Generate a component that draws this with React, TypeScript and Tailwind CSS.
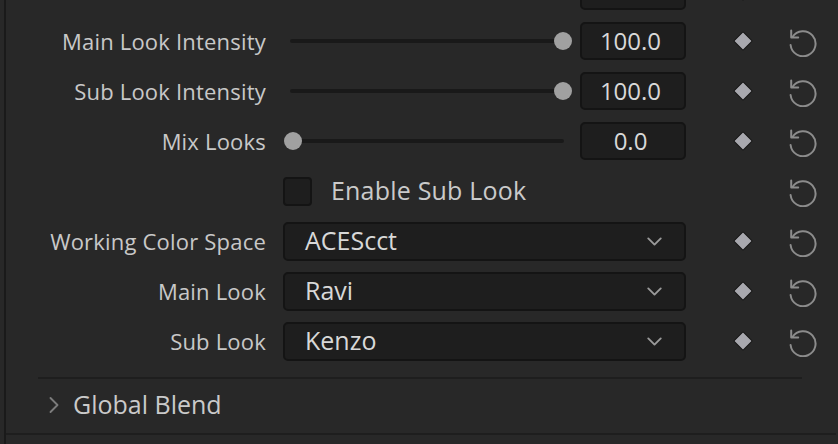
import React from 'react';
import { ChevronDown, ChevronRight } from 'lucide-react';

const labelCls = 'w-[260px] shrink-0 text-right text-[22px] tracking-[0.2px] text-[#c8c8c8] leading-none';

const Diamond: React.FC<{ hidden?: boolean }> = ({ hidden }) => (
    <div className="ml-[47px] flex h-[20px] w-[20px] shrink-0 items-center justify-center">
        {!hidden && <div className="h-[14px] w-[14px] rotate-45 rounded-[1px] border border-[#1a1a1a] bg-[#a8a8ae]" />}
    </div>
);

const Reset: React.FC = () => (
    <div className="ml-[33px] flex h-[32px] w-[32px] shrink-0 items-center justify-center">
        <svg width="32" height="32" viewBox="0 0 32 32" fill="none" stroke="#8c8c8c" strokeWidth="2" strokeLinecap="round" strokeLinejoin="round">
            <path d="M6.5 12 A12.5 12.5 0 1 1 4.6 20" />
            <path d="M5.2 5.5 V12.5 H12.2" />
        </svg>
    </div>
);

const SliderRow: React.FC<{ label: string; value: string; pct: number }> = ({ label, value, pct }) => (
    <div className="flex h-[50px] items-center">
        <span className={labelCls}>{label}</span>
        <div className="relative ml-[17px] h-[20px] w-[289px] shrink-0">
            <div className="absolute left-[7px] right-[8px] top-[8px] h-[4px] rounded-full bg-[#191919]" />
            <div
                className="absolute top-[1px] h-[18px] w-[18px] rounded-full bg-[#a0a0a0]"
                style={{ left: `${1 + pct * 270}px` }}
            />
        </div>
        <div className="ml-[8px] flex h-[38px] w-[106px] shrink-0 items-center justify-center rounded-[5px] border-2 border-[#141414] bg-[#1e1e1e] pr-[5px] text-[24px] text-[#d8d8d8]">
            {value}
        </div>
        <Diamond />
        <Reset />
    </div>
);

const SelectRow: React.FC<{ label: string; value: string }> = ({ label, value }) => (
    <div className="flex h-[50px] items-center">
        <span className={labelCls}>{label}</span>
        <div className="ml-[17px] flex h-[39px] w-[403px] shrink-0 items-center justify-between rounded-[5px] border-2 border-[#141414] bg-[#1e1e1e] pl-[20px] pr-[17px]">
            <span className="text-[25px] text-[#d8d8d8]">{value}</span>
            <ChevronDown size={25} strokeWidth={1.8} className="text-[#9a9a9a]" />
        </div>
        <Diamond />
        <Reset />
    </div>
);

export default function App() {
    return (
        <div
            className="h-[444px] w-[838px] overflow-hidden bg-[#282828]"
            style={{ fontFamily: '"Open Sans", "Noto Sans", sans-serif' }}
        >
            <div className="ml-[4px] flex h-full flex-col border-l-2 border-[#1a1a1a]">
                {/* partial row cut at the top */}
                <div className="-mt-[34px] flex h-[50px] items-center">
                    <div className="ml-[574px] h-[38px] w-[106px] shrink-0 rounded-[5px] border-2 border-[#141414] bg-[#1e1e1e]" />
                    <Diamond />
                </div>

                <SliderRow label="Main Look Intensity" value="100.0" pct={1} />
                <SliderRow label="Sub Look Intensity" value="100.0" pct={1} />
                <SliderRow label="Mix Looks" value="0.0" pct={0} />

                <div className="flex h-[50px] items-center">
                    <div className="ml-[277px] h-[29px] w-[29px] shrink-0 rounded-[4px] border-2 border-[#141414] bg-[#1e1e1e]" />
                    <span className="ml-[19px] w-[355px] shrink-0 text-[25px] tracking-[0.2px] text-[#cacaca]">Enable Sub Look</span>
                    <Diamond hidden />
                    <Reset />
                </div>

                <SelectRow label="Working Color Space" value="ACEScct" />
                <SelectRow label="Main Look" value="Ravi" />
                <SelectRow label="Sub Look" value="Kenzo" />

                <div className="ml-[32px] mt-[11px] h-[2px] w-[764px] bg-[#1e1e1e]" />

                <div className="flex h-[54px] items-center pb-[3px]">
                    <ChevronRight size={28} strokeWidth={1.6} className="ml-[34px] text-[#7c7c7c]" />
                    <span className="ml-[5px] text-[25px] text-[#cacaca]">Global Blend</span>
                </div>

                <div className="h-[2px] w-[830px] bg-[#1e1e1e]" />
            </div>
        </div>
    );
}
